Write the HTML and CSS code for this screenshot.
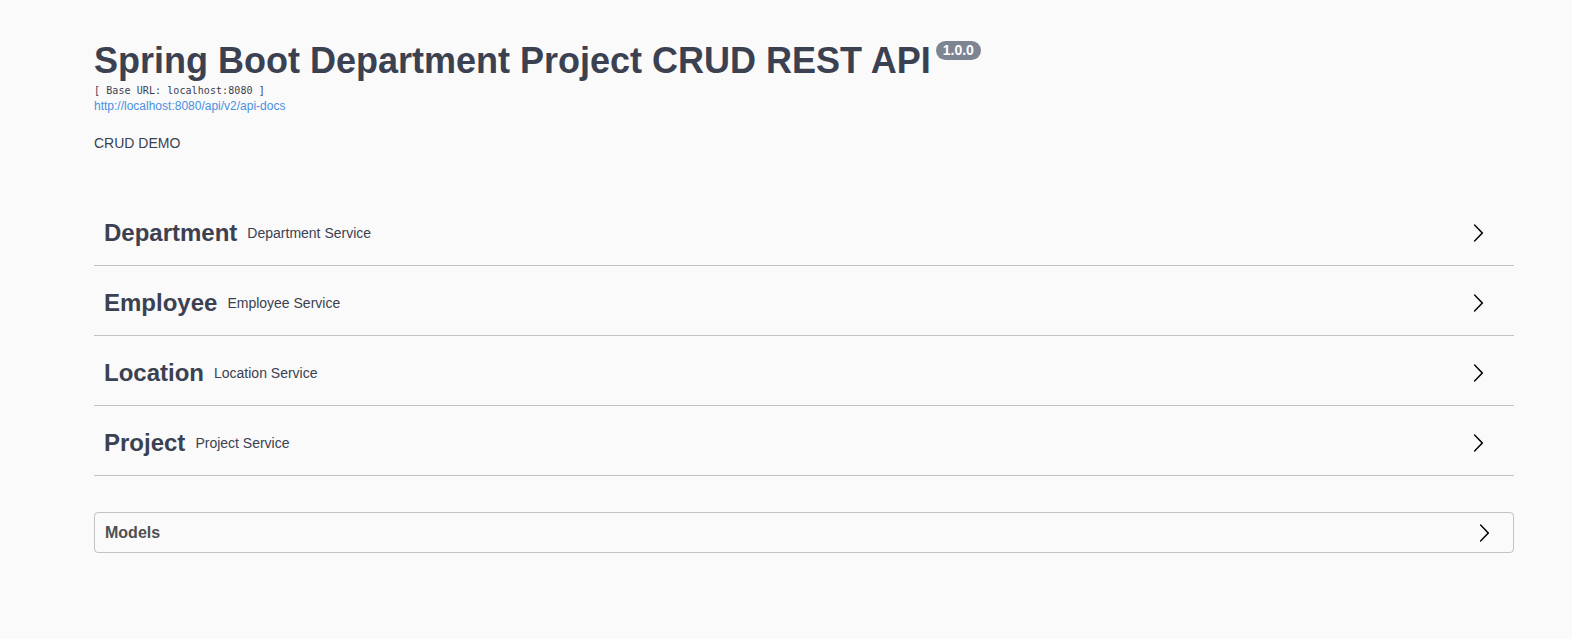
FILE: index.html
```html
<!DOCTYPE html>
<html>
<head>
<meta charset="utf-8">
<link rel="stylesheet" href="styles.css">
</head>
<body>
<div class="wrapper">
  <div class="info">
    <h2 class="title">Spring Boot Department Project CRUD REST API<span class="version">1.0.0</span></h2>
    <pre class="base-url">[ Base URL: localhost:8080 ]</pre>
    <a class="spec-link" href="#">http://localhost:8080/api/v2/api-docs</a>
    <p class="desc">CRUD DEMO</p>
  </div>

  <div class="tags">
    <div class="tag">
      <span class="tag-name">Department</span>
      <small class="tag-desc">Department Service</small>
      <svg class="arrow" width="20" height="20" viewBox="0 0 20 20"><path d="M13.25 10L6.109 2.58a.697.697 0 0 1 0-.979.68.68 0 0 1 .969 0l7.83 7.908a.697.697 0 0 1 0 .979l-7.830 7.908a.68.68 0 0 1-.969 0 .697.697 0 0 1 0-.979L13.25 10z"/></svg>
    </div>
    <div class="tag">
      <span class="tag-name">Employee</span>
      <small class="tag-desc">Employee Service</small>
      <svg class="arrow" width="20" height="20" viewBox="0 0 20 20"><path d="M13.25 10L6.109 2.58a.697.697 0 0 1 0-.979.68.68 0 0 1 .969 0l7.83 7.908a.697.697 0 0 1 0 .979l-7.83 7.908a.68.68 0 0 1-.969 0 .697.697 0 0 1 0-.979L13.25 10z"/></svg>
    </div>
    <div class="tag">
      <span class="tag-name">Location</span>
      <small class="tag-desc">Location Service</small>
      <svg class="arrow" width="20" height="20" viewBox="0 0 20 20"><path d="M13.25 10L6.109 2.58a.697.697 0 0 1 0-.979.68.68 0 0 1 .969 0l7.83 7.908a.697.697 0 0 1 0 .979l-7.83 7.908a.68.68 0 0 1-.969 0 .697.697 0 0 1 0-.979L13.25 10z"/></svg>
    </div>
    <div class="tag">
      <span class="tag-name">Project</span>
      <small class="tag-desc">Project Service</small>
      <svg class="arrow" width="20" height="20" viewBox="0 0 20 20"><path d="M13.25 10L6.109 2.58a.697.697 0 0 1 0-.979.68.68 0 0 1 .969 0l7.83 7.908a.697.697 0 0 1 0 .979l-7.83 7.908a.68.68 0 0 1-.969 0 .697.697 0 0 1 0-.979L13.25 10z"/></svg>
    </div>
  </div>

  <section class="models">
    <h4 class="models-title">Models</h4>
    <svg class="arrow models-arrow" width="20" height="20" viewBox="0 0 20 20"><path d="M13.25 10L6.109 2.58a.697.697 0 0 1 0-.979.68.68 0 0 1 .969 0l7.83 7.908a.697.697 0 0 1 0 .979l-7.83 7.908a.68.68 0 0 1-.969 0 .697.697 0 0 1 0-.979L13.25 10z"/></svg>
  </section>
</div>
</body>
</html>
```

FILE: styles.css
```css
html, body {
  margin: 0;
  padding: 0;
  background: #fafafa;
}

body {
  font-family: "Liberation Sans", Arial, sans-serif;
  color: #3b4151;
}

.wrapper {
  padding: 0 58px 0 94px;
}

.info {
  padding-top: 38px;
}

.title {
  margin: 0;
  font-size: 36px;
  line-height: 45px;
  font-weight: 700;
  color: #3b4151;
}

.version {
  display: inline-block;
  position: relative;
  top: -5px;
  vertical-align: super;
  margin-left: 5px;
  padding: 2px 7px;
  border-radius: 57px;
  background: #7d8492;
  color: #fff;
  font-size: 14px;
  line-height: 15px;
  font-weight: 700;
}

.base-url {
  margin: 1px 0 0;
  font-family: "DejaVu Sans Mono", "Liberation Mono", monospace;
  font-size: 10px;
  letter-spacing: 0.08px;
  line-height: 14px;
  color: #3b4151;
}

.spec-link {
  display: block;
  font-size: 12px;
  line-height: 16px;
  color: #4990e2;
  text-decoration: none;
}

.desc {
  margin: 21px 0 0;
  font-size: 14px;
  line-height: 17px;
}

.tags {
  margin-top: 49px;
}

.tag {
  display: flex;
  align-items: center;
  height: 65px;
  box-sizing: border-box;
  margin-bottom: 5px;
  padding: 0 26px 0 10px;
  border-bottom: 1px solid rgba(59, 65, 81, 0.3);
}

.tag-name {
  font-size: 24px;
  font-weight: 700;
}

.tag-desc {
  flex: 1;
  padding: 0 10px;
  font-size: 14px;
}

.arrow {
  display: block;
  fill: #000;
}

.models {
  display: flex;
  align-items: center;
  margin-top: 36px;
  height: 41px;
  box-sizing: border-box;
  border: 1px solid rgba(59, 65, 81, 0.3);
  border-radius: 4px;
  padding: 0 19px 0 10px;
}

.models-title {
  flex: 1;
  margin: 0;
  font-size: 16px;
  font-weight: 700;
  color: #505050;
}
```
